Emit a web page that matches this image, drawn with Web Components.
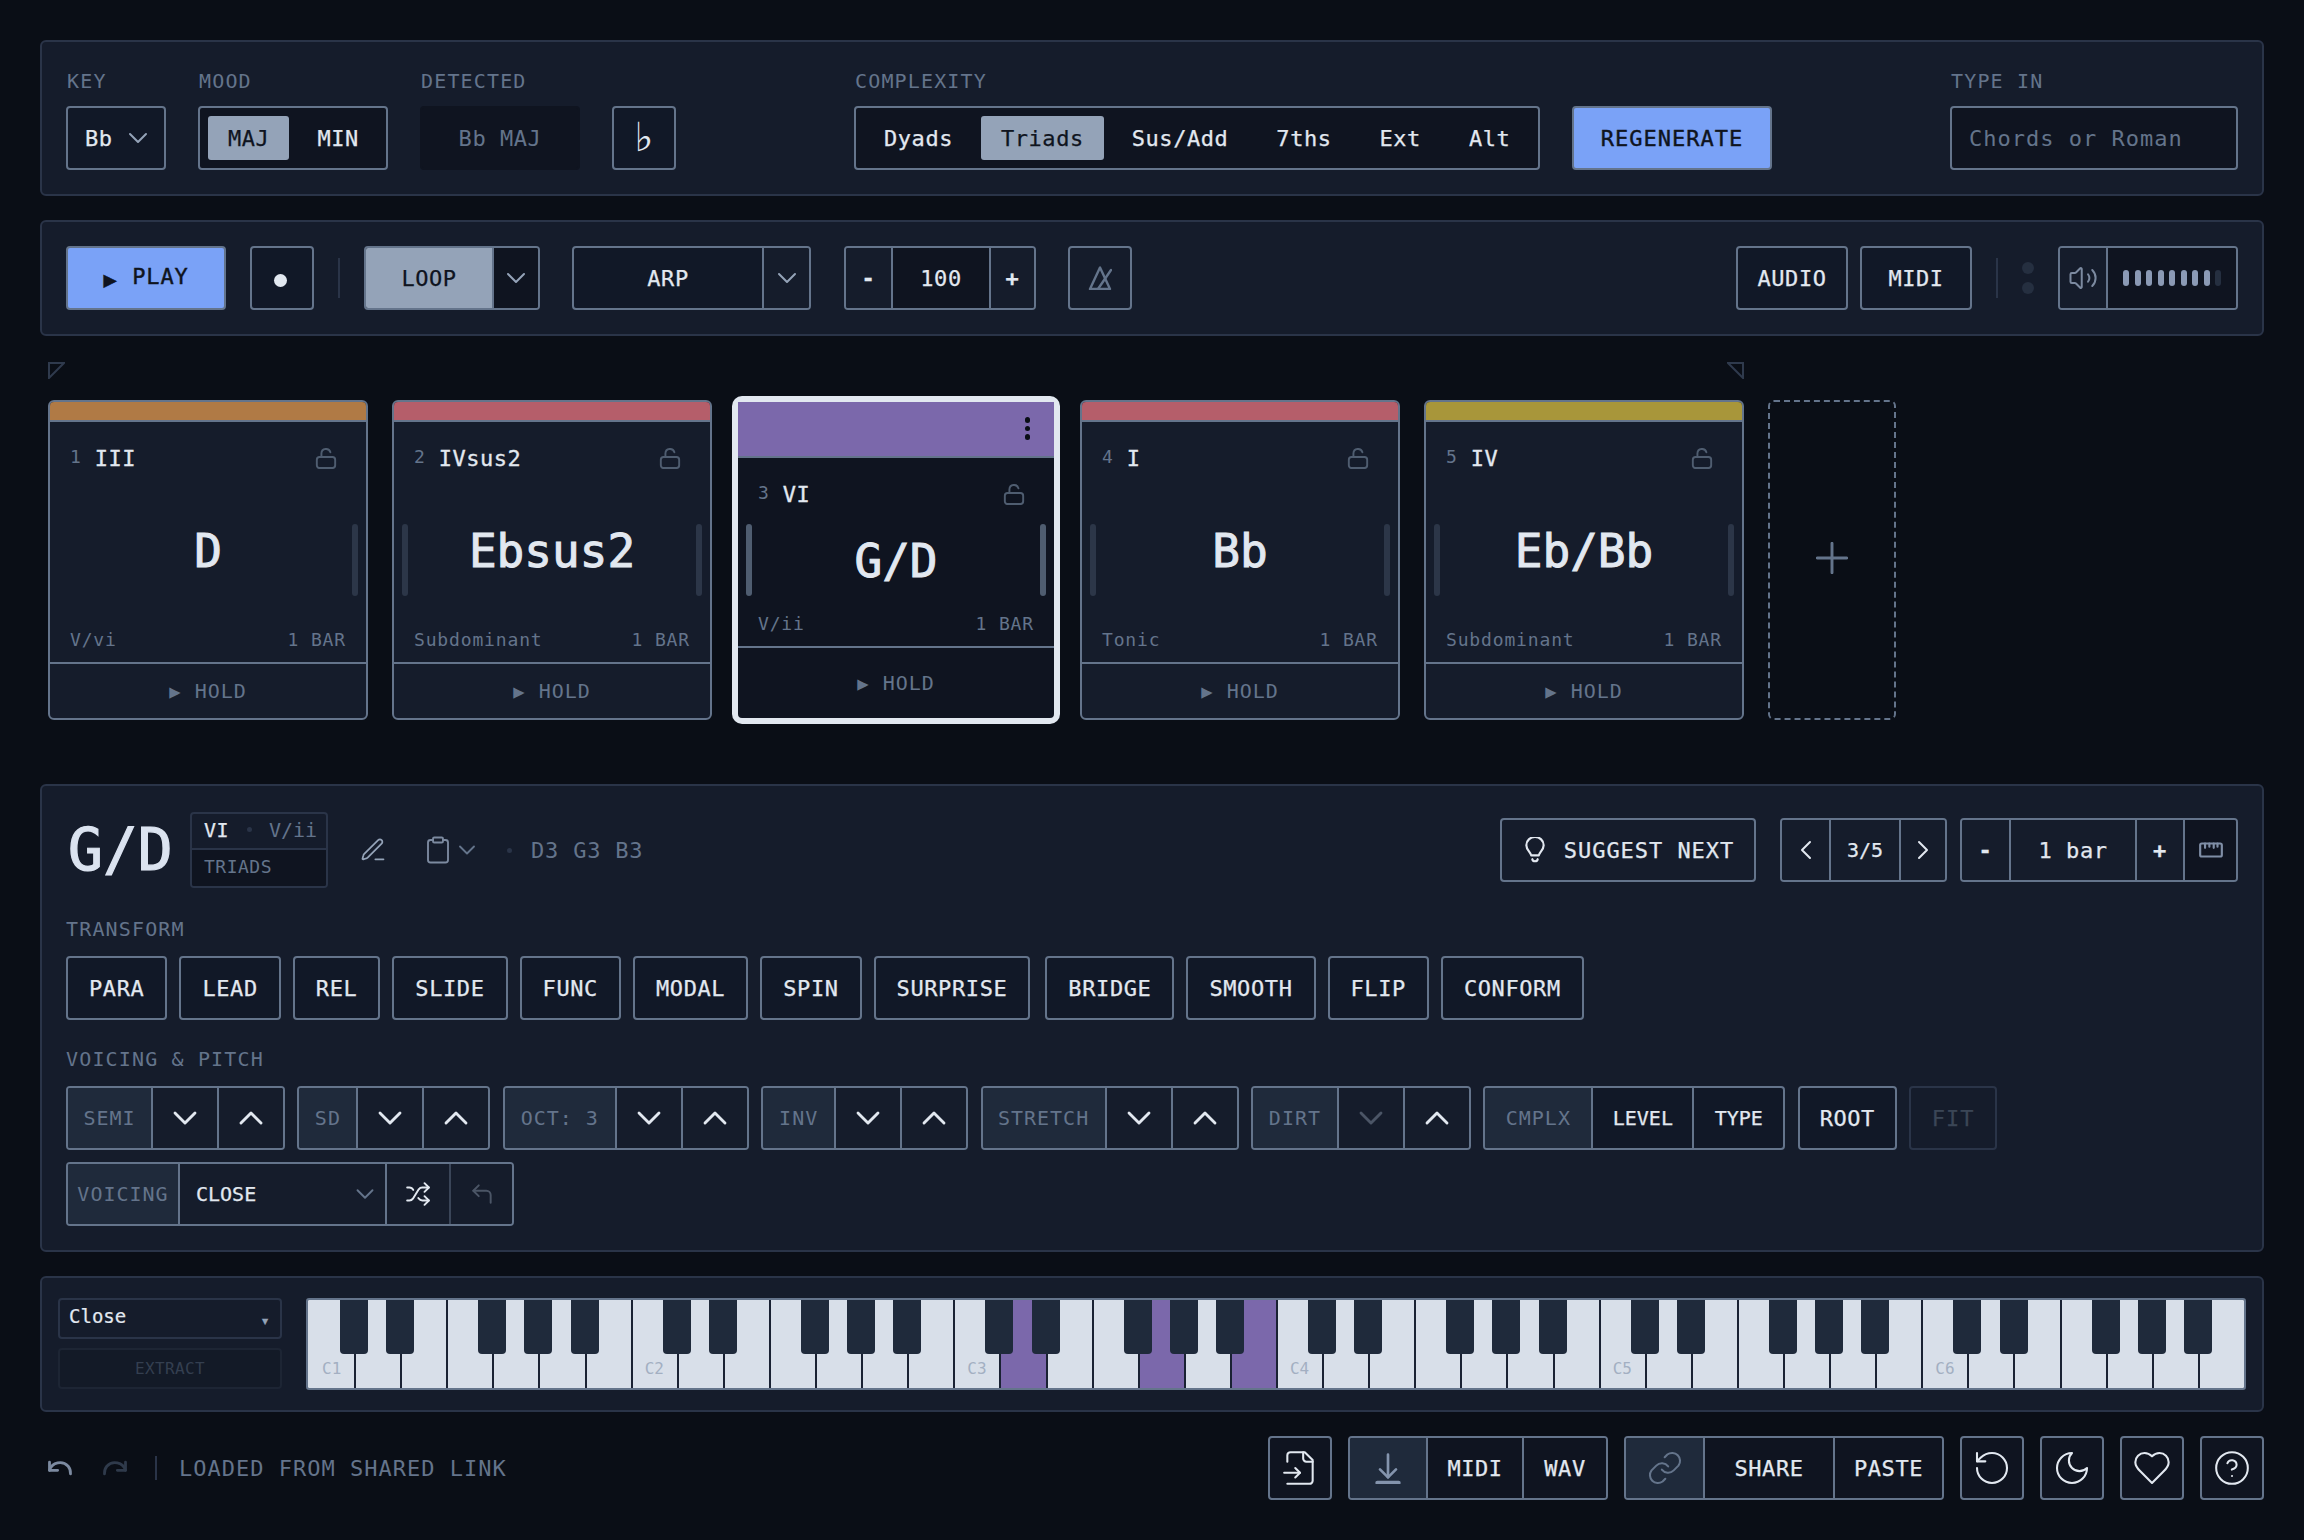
<!DOCTYPE html>
<html lang="en">
<head>
<meta charset="utf-8">
<title>Chord progression</title>
<style>
html, body { margin: 0; background: #0a0e16; }
body {
    font-family: "DejaVu Sans Mono", "Liberation Mono", monospace;
    color: #e2e8f0;
}
</style>
</head>
<body>
<app-shell>

    <ui-panel>
        <ui-row style="justify-content:space-between;align-items:flex-end">
            <ui-row style="gap:32px;align-items:flex-end">
                <ui-field label="KEY">
                    <ui-box style="width:100px;justify-content:flex-start;padding-left:17px;gap:9px"><span>Bb</span><ui-icon name="down" size="32" stroke="1.5" style="color:#94a3b8"></ui-icon></ui-box>
                </ui-field>
                <ui-field label="MOOD">
                    <ui-box tone="dark" style="width:190px;padding:0 8px;gap:8px;justify-content:flex-start"><ui-pill on>MAJ</ui-pill><ui-pill>MIN</ui-pill></ui-box>
                </ui-field>
                <ui-field label="DETECTED">
                    <ui-box tone="well" style="width:160px">Bb MAJ</ui-box>
                </ui-field>
                <ui-box style="width:64px;font-family:'DejaVu Sans',sans-serif;font-size:40px;-webkit-text-stroke:0;padding-bottom:3px">♭</ui-box>
            </ui-row>
            <ui-row style="gap:32px;align-items:flex-end">
                <ui-field label="COMPLEXITY">
                    <ui-box tone="dark" style="width:686px;padding:0 8px;gap:8px;justify-content:flex-start"><ui-pill>Dyads</ui-pill><ui-pill on>Triads</ui-pill><ui-pill>Sus/Add</ui-pill><ui-pill>7ths</ui-pill><ui-pill>Ext</ui-pill><ui-pill>Alt</ui-pill></ui-box>
                </ui-field>
                <ui-box tone="primary" style="width:200px;letter-spacing:1px">REGENERATE</ui-box>
            </ui-row>
            <ui-field label="TYPE IN">
                <ui-box tone="dark" style="width:288px;justify-content:flex-start;padding-left:17px;color:#64748b;letter-spacing:1px;-webkit-text-stroke:0">Chords or Roman</ui-box>
            </ui-field>
        </ui-row>
    </ui-panel>

    <ui-panel style="margin-top:24px">
        <ui-row style="justify-content:space-between;align-items:center">
            <ui-row style="align-items:center">
                <ui-box tone="primary" style="width:160px;gap:15px"><span style="font-size:22px;padding-top:2px">▶</span><span style="padding-bottom:4px;letter-spacing:.8px">PLAY</span></ui-box>
                <ui-box style="width:64px;margin-left:24px"><ui-dot style="margin-top:4px;margin-left:-3px"></ui-dot></ui-box>
                <ui-sep style="margin:0 24px"></ui-sep>
                <ui-box group style="width:176px"><ui-cell tone="active" style="width:126px">LOOP</ui-cell><ui-cell tone="dark" fill><ui-icon name="down" size="32" stroke="1.5" style="color:#94a3b8"></ui-icon></ui-cell></ui-box>
                <ui-box group style="width:239px;margin-left:32px"><ui-cell style="width:188px">ARP</ui-cell><ui-cell tone="panel" fill><ui-icon name="down" size="32" stroke="1.5" style="color:#94a3b8"></ui-icon></ui-cell></ui-box>
                <ui-box group style="width:192px;margin-left:33px"><ui-cell tone="panel" style="width:45px"><b>-</b></ui-cell><ui-cell tone="dark" style="width:98px">100</ui-cell><ui-cell tone="panel" fill><b>+</b></ui-cell></ui-box>
                <ui-box tone="panel" style="width:64px;margin-left:32px;color:#64748b"><ui-icon name="metronome" size="24" stroke="2.4"></ui-icon></ui-box>
            </ui-row>
            <ui-row style="align-items:center">
                <ui-box style="width:112px">AUDIO</ui-box>
                <ui-box style="width:112px;margin-left:12px">MIDI</ui-box>
                <ui-sep style="margin:0 24px"></ui-sep>
                <ui-leds></ui-leds>
                <ui-box group style="width:180px;margin-left:24px"><ui-cell tone="panel" style="width:46px;color:#7c8aa0"><ui-icon name="speaker" size="30" stroke="1.6"></ui-icon></ui-cell><ui-cell tone="dark" fill><ui-meter level="8" count="9"></ui-meter></ui-cell></ui-box>
            </ui-row>
        </ui-row>
    </ui-panel>

    <card-rail>
        <chord-card num="1" roman="III" func="V/vi" color="#b07a45" no-left>D</chord-card>
        <chord-card num="2" roman="IVsus2" func="Subdominant" color="#b55e6a">Ebsus2</chord-card>
        <chord-card num="3" roman="VI" func="V/ii" color="#7b68ab" selected>G/D</chord-card>
        <chord-card num="4" roman="I" func="Tonic" color="#b55e6a">Bb</chord-card>
        <chord-card num="5" roman="IV" func="Subdominant" color="#a8963a">Eb/Bb</chord-card>
        <add-card></add-card>
    </card-rail>

    <ui-panel style="margin-top:64px">
        <ui-row style="justify-content:space-between;align-items:center;height:80px">
            <ui-row style="align-items:center">
                <chord-title>G/D</chord-title>
                <chord-meta roman="VI" func="V/ii" kind="TRIADS" style="margin-left:16px"></chord-meta>
                <ui-icon name="pencil" size="28" stroke="1.5" style="margin-left:31px;color:#94a3b8"></ui-icon>
                <ui-icon name="clipboard" size="30" stroke="1.5" style="margin-left:36px;color:#7c8aa0"></ui-icon>
                <ui-icon name="down" size="28" stroke="1.6" style="margin-left:0;color:#64748b"></ui-icon>
                <ui-note-list style="margin-left:26px">D3 G3 B3</ui-note-list>
            </ui-row>
            <ui-row style="align-items:center">
                <ui-box tone="panel" style="width:256px;gap:16px;letter-spacing:.95px"><ui-icon name="bulb" size="26" stroke="2"></ui-icon><span>SUGGEST NEXT</span></ui-box>
                <ui-box group tone="panel" style="width:167px;margin-left:24px"><ui-cell tone="panel" style="width:47px"><ui-icon name="left" size="32" stroke="1.5"></ui-icon></ui-cell><ui-cell tone="panel" style="width:70px;font-size:20px;letter-spacing:0">3/5</ui-cell><ui-cell tone="panel" fill><ui-icon name="right" size="32" stroke="1.5"></ui-icon></ui-cell></ui-box>
                <ui-box group tone="panel" style="width:278px;margin-left:13px"><ui-cell tone="panel" style="width:47px"><b>-</b></ui-cell><ui-cell tone="panel" style="width:126px">1 bar</ui-cell><ui-cell tone="panel" style="width:48px"><b>+</b></ui-cell><ui-cell tone="dark" fill style="color:#7f8ea6"><ui-icon name="ruler" size="26" stroke="2"></ui-icon></ui-cell></ui-box>
            </ui-row>
        </ui-row>

        <ui-section style="margin-top:25px;margin-bottom:13px">TRANSFORM</ui-section>
        <ui-row style="gap:12px">
            <ui-chip>PARA</ui-chip><ui-chip>LEAD</ui-chip><ui-chip>REL</ui-chip><ui-chip>SLIDE</ui-chip><ui-chip>FUNC</ui-chip><ui-chip>MODAL</ui-chip><ui-chip>SPIN</ui-chip><ui-chip>SURPRISE</ui-chip><ui-chip style="margin-left:3px">BRIDGE</ui-chip><ui-chip>SMOOTH</ui-chip><ui-chip>FLIP</ui-chip><ui-chip>CONFORM</ui-chip>
        </ui-row>

        <ui-section style="margin-top:25px;margin-bottom:13px">VOICING &amp; PITCH</ui-section>
        <ui-row style="gap:12.4px">
            <step-group label="SEMI" width="83"></step-group>
            <step-group label="SD" width="57"></step-group>
            <step-group label="OCT: 3" width="110"></step-group>
            <step-group label="INV" width="71"></step-group>
            <step-group label="STRETCH" width="122"></step-group>
            <step-group label="DIRT" width="84" dim-down></step-group>
            <ui-box group style="width:302px;font-size:20px;letter-spacing:0"><ui-cell tone="label" style="width:106px">CMPLX</ui-cell><ui-cell style="width:101px">LEVEL</ui-cell><ui-cell fill>TYPE</ui-cell></ui-box>
            <ui-box style="width:99px">ROOT</ui-box>
            <ui-box tone="off" style="width:88px">FIT</ui-box>
        </ui-row>
        <ui-row style="margin-top:12px">
            <ui-box group style="width:448px"><ui-cell tone="label" style="width:110px">VOICING</ui-cell><ui-cell tone="panel" style="width:207px;justify-content:flex-start;padding-left:16px;font-size:20px;letter-spacing:0"><span style="flex:1">CLOSE</span><ui-icon name="down" size="30" stroke="1.5" style="color:#64748b;margin-right:5px"></ui-icon></ui-cell><ui-cell tone="panel" style="width:64px"><ui-icon name="shuffle" size="26" stroke="1.8"></ui-icon></ui-cell><ui-cell tone="panel" quiet fill style="color:#4b5566"><ui-icon name="back" size="26" stroke="1.8"></ui-icon></ui-cell></ui-box>
        </ui-row>
    </ui-panel>

    <ui-panel style="margin-top:24px;padding:20px 16px">
        <ui-row style="gap:24px">
            <ui-row style="flex-direction:column;gap:9px;width:224px">
                <mini-select>Close</mini-select>
                <mini-select ghost>EXTRACT</mini-select>
            </ui-row>
            <piano-keys octaves="6" start="1" active="15,18,20" style="flex:1"></piano-keys>
        </ui-row>
    </ui-panel>

    <ui-row style="margin-top:24px;justify-content:space-between;align-items:center">
        <ui-row style="align-items:center;padding-left:6px">
            <ui-icon name="undo" size="28" stroke="2.4" style="color:#7c8aa0"></ui-icon>
            <ui-icon name="redo" size="28" stroke="2.4" style="color:#2f3a4b;margin-left:27px"></ui-icon>
            <ui-sep style="margin:0 22px 0 26px;height:24px"></ui-sep>
            <ui-status>LOADED FROM SHARED LINK</ui-status>
        </ui-row>
        <ui-row style="gap:16px">
            <ui-box tone="dark" style="width:64px"><ui-icon name="filein" size="38" stroke="1.3"></ui-icon></ui-box>
            <ui-box group tone="dark" style="width:260px"><ui-cell tone="label" style="width:76px;color:#8494ad"><ui-icon name="download" size="32" stroke="2"></ui-icon></ui-cell><ui-cell tone="dark" style="width:96px">MIDI</ui-cell><ui-cell tone="dark" fill>WAV</ui-cell></ui-box>
            <ui-box group tone="dark" style="width:320px"><ui-cell tone="label" style="width:77px;color:#64748b"><ui-icon name="link" size="38" stroke="1.3"></ui-icon></ui-cell><ui-cell tone="dark" style="width:130px">SHARE</ui-cell><ui-cell tone="dark" fill>PASTE</ui-cell></ui-box>
            <ui-box tone="dark" style="width:64px"><ui-icon name="reset" size="40" stroke="1.25"></ui-icon></ui-box>
            <ui-box tone="dark" style="width:64px"><ui-icon name="moon" size="40" stroke="1.25"></ui-icon></ui-box>
            <ui-box tone="dark" style="width:64px"><ui-icon name="heart" size="40" stroke="1.25"></ui-icon></ui-box>
            <ui-box tone="dark" style="width:64px"><ui-icon name="help" size="38" stroke="1.3"></ui-icon></ui-box>
        </ui-row>
    </ui-row>

</app-shell>

<script>
// shared colours live here so every shadow root can read them
const LINE = '#64748b';
const DIM_LINE = '#2a3448';
const PANEL = '#151c2b';
const DARK = '#0f1420';
const SOFT = '#111827';

const ICONS = {
    down: '<polyline points="6 9 12 15 18 9"/>',
    up: '<polyline points="6 15 12 9 18 15"/>',
    left: '<polyline points="15 6 9 12 15 18"/>',
    right: '<polyline points="9 6 15 12 9 18"/>',
    metronome: '<path d="M2 23H22L12 1.5Z"/><path d="M23 4L10 23"/>',
    speaker: '<path d="M11 4.7a.7.7 0 0 0-1.2-.5L6.4 7.6A1.4 1.4 0 0 1 5.4 8H3a1 1 0 0 0-1 1v6a1 1 0 0 0 1 1h2.4a1.4 1.4 0 0 1 1 .4l3.4 3.4a.7.7 0 0 0 1.2-.5z"/><path d="M16 9a5 5 0 0 1 0 6"/><path d="M19.4 18.4a9 9 0 0 0 0-12.8"/>',
    lock: '<rect x="2" y="11" width="20" height="12" rx="3"/><path d="M7 11V7a5 5 0 0 1 9.8-1.2"/>',
    pencil: '<path d="M14 20h7"/><path d="M16.4 3.6a1 1 0 0 1 3 3L7.4 18.6a2 2 0 0 1-.9.5l-2.9.9a.5.5 0 0 1-.6-.6l.8-2.9a2 2 0 0 1 .5-.9z"/>',
    clipboard: '<rect x="8" y="2" width="8" height="4" rx="1"/><path d="M16 4h2a2 2 0 0 1 2 2v14a2 2 0 0 1-2 2H6a2 2 0 0 1-2-2V6a2 2 0 0 1 2-2h2"/>',
    bulb: '<path d="M8.5 18C8 15 4 13 4 8.5a8 7.5 0 0 1 16 0C20 13 16 15 15.5 18Z" transform="translate(0 -1)"/><path d="M9.5 20.5c.5 2.5 4.5 2.5 5 0"/>',
    ruler: '<rect x="2" y="6" width="20" height="12" rx="1.5"/><path d="M6.5 6v4M10.5 6v3M14.5 6v4M18 6v3"/>',
    shuffle: '<path d="m18 14 4 4-4 4"/><path d="m18 2 4 4-4 4"/><path d="M2 18h2a4 4 0 0 0 3.3-1.7l5.4-8.6A4 4 0 0 1 16 6h6"/><path d="M2 6h2a4 4 0 0 1 3.6 2.2"/><path d="M22 18h-6a4 4 0 0 1-3.3-1.8l-.4-.5"/>',
    back: '<polyline points="9 14 4 9 9 4"/><path d="M20 20v-7a4 4 0 0 0-4-4H4"/>',
    undo: '<path d="M3 7v7h7"/><path d="M3 14a9.5 9.5 0 0 1 16-3.5 9 9 0 0 1 2 6.5"/>',
    redo: '<path d="M21 7v7h-7"/><path d="M21 14a9.5 9.5 0 0 0-16-3.5 9 9 0 0 0-2 6.5"/>',
    filein: '<path d="M4 22h14a2 2 0 0 0 2-2V7l-5-5H6a2 2 0 0 0-2 2v4"/><path d="M14 2v4a2 2 0 0 0 2 2h4"/><path d="M2 15h10"/><path d="m9 18 3-3-3-3"/>',
    download: '<path d="M12 2v17"/><path d="M6 13l6 6 6-6"/><path d="M4 23h16" stroke-width="3"/>',
    link: '<path d="M10 13a5 5 0 0 0 7.5.5l3-3a5 5 0 0 0-7-7l-1.7 1.7"/><path d="M14 11a5 5 0 0 0-7.5-.5l-3 3a5 5 0 0 0 7 7l1.7-1.7"/>',
    reset: '<path d="M3 12a9 9 0 1 0 9-9 9.8 9.8 0 0 0-6.7 2.7L3 8"/><path d="M3 3v5h5"/>',
    moon: '<path d="M12 3a6 6 0 0 0 9 9 9 9 0 1 1-9-9Z"/>',
    heart: '<path d="M19 14c1.5-1.5 3-3.2 3-5.5A5.5 5.5 0 0 0 16.500 3c-1.800 0-3 .5-4.500 2-1.500-1.500-2.700-2-4.500-2A5.500 5.500 0 0 0 2 8.500c0 2.300 1.500 4 3 5.500l7 7Z"/>',
    help: '<circle cx="12" cy="12" r="10"/><path d="M9.100 9a3 3 0 0 1 5.800 1c0 2-3 3-3 3"/><path d="M12 17h.01"/>',
    plus: '<path d="M12 1v22M1 12h22"/>'
};

// base class: one template per tag, stamped into an open shadow root
class ShadowElement extends HTMLElement {
    constructor() {
        super();
        const tpl = document.createElement('template');
        tpl.innerHTML = this.constructor.markup;
        this.attachShadow({mode: 'open'}).append(tpl.content.cloneNode(true));
    }
}

function simple(tag, markup) {
    customElements.define(tag, class extends ShadowElement {
        static get markup() { return markup; }
    });
}

simple('app-shell', `<style>
:host { display: block; box-sizing: border-box; width: 2304px; height: 1540px; padding: 40px; }
</style><slot></slot>`);

simple('ui-panel', `<style>
:host { display: block; box-sizing: border-box; padding: 24px; background: ${PANEL}; border: 2px solid ${DIM_LINE}; border-radius: 6px; }
</style><slot></slot>`);

simple('ui-row', `<style>
:host { display: flex; }
</style><slot></slot>`);

simple('ui-section', `<style>
:host { display: block; height: 28px; line-height: 28px; font-size: 20px; letter-spacing: 1.15px; color: ${LINE}; }
</style><slot></slot>`);

simple('ui-status', `<style>
:host { display: block; font-size: 22px; letter-spacing: 1px; color: ${LINE}; }
</style><slot></slot>`);

simple('ui-note-list', `<style>
:host { display: flex; align-items: center; gap: 19px; font-size: 22px; letter-spacing: .8px; color: ${LINE}; }
i { width: 5px; height: 5px; border-radius: 50%; background: ${DIM_LINE}; }
</style><i></i><slot></slot>`);

simple('ui-sep', `<style>
:host { display: block; width: 2px; height: 40px; background: ${DIM_LINE}; flex: none; }
</style>`);

simple('ui-dot', `<style>
:host { display: block; width: 13px; height: 13px; border-radius: 50%; background: #e2e8f0; }
</style>`);

simple('ui-leds', `<style>
:host { display: flex; flex-direction: column; gap: 8px; }
i { width: 12px; height: 12px; border-radius: 50%; background: #252f40; }
</style><i></i><i></i>`);

simple('ui-box', `<style>
:host {
    display: inline-flex; flex: none; box-sizing: border-box; height: 64px;
    align-items: center; justify-content: center; overflow: hidden;
    border: 2px solid ${LINE}; border-radius: 4px; background: ${SOFT};
    font-size: 22px; letter-spacing: .55px; color: #e2e8f0;
    -webkit-text-stroke: .25px currentColor;
}
:host([group]) { align-items: stretch; justify-content: flex-start; }
:host([tone=dark]) { background: ${DARK}; }
:host([tone=panel]) { background: ${PANEL}; }
:host([tone=well]) { background: ${DARK}; border-color: ${DARK}; color: ${LINE}; -webkit-text-stroke: 0; }
:host([tone=primary]) { background: #7aa2f7; color: ${DARK}; -webkit-text-stroke: .4px currentColor; }
:host([tone=off]) { background: ${PANEL}; border-color: ${DIM_LINE}; color: #3b4656; font-size: 22px; letter-spacing: 1px; }
</style><slot></slot>`);

simple('ui-cell', `<style>
:host { display: flex; flex: none; box-sizing: border-box; align-items: center; justify-content: center; }
:host(:not(:first-child)) { border-left: 2px solid ${LINE}; }
:host([quiet]) { border-left-color: #3a4558; }
:host([fill]) { flex: 1; }
:host([tone=label]) { background: #1f2a3b; color: ${LINE}; font-size: 20px; letter-spacing: 1px; -webkit-text-stroke: 0; }
:host([tone=dark]) { background: ${DARK}; }
:host([tone=panel]) { background: ${PANEL}; }
:host([tone=active]) { background: #94a3b8; color: ${DARK}; }
</style><slot></slot>`);

simple('ui-pill', `<style>
:host { display: flex; height: 44px; align-items: center; padding: 0 20px; border-radius: 3px; }
:host([on]) { background: #94a3b8; color: ${DARK}; }
</style><slot></slot>`);

simple('ui-chip', `<style>
:host {
    display: inline-flex; flex: none; box-sizing: border-box; height: 64px; align-items: center; padding: 0 21px;
    border: 2px solid ${LINE}; border-radius: 4px; background: ${SOFT};
    font-size: 22px; letter-spacing: .6px; color: #e2e8f0;
    -webkit-text-stroke: .25px currentColor;
}
</style><slot></slot>`);

simple('chord-title', `<style>
:host { display: block; box-sizing: border-box; width: 108px; padding-left: 2px; font-size: 58px; line-height: 80px; color: #dbe3f0; -webkit-text-stroke: 1.2px currentColor; }
</style><slot></slot>`);

simple('card-rail', `<style>
:host { display: block; margin: 26px 8px 0; }
.flags { display: flex; justify-content: space-between; width: 1696px; height: 38px; color: #2f3a4d; }
.cards { display: flex; gap: 24px; }
svg { display: block; }
</style>
<div class="flags">
    <svg width="17" height="17" viewBox="0 0 17 17" fill="none" stroke="currentColor" stroke-width="2"><path d="M1 1H16L1 16Z"/></svg>
    <svg width="17" height="17" viewBox="0 0 17 17" fill="none" stroke="currentColor" stroke-width="2"><path d="M16 1H1L16 16Z"/></svg>
</div>
<div class="cards"><slot></slot></div>`);

simple('add-card', `<style>
:host { display: flex; flex: none; box-sizing: border-box; width: 128px; height: 320px; align-items: center; justify-content: center; padding-bottom: 4px; border: 2px dashed ${LINE}; border-radius: 6px; color: ${LINE}; }
</style><ui-icon name="plus" size="32" stroke="2.2"></ui-icon>`);

simple('mini-select', `<style>
:host { display: flex; box-sizing: border-box; height: 41px; align-items: center; padding: 0 9px 5px; border: 2px solid ${DIM_LINE}; border-radius: 4px; font-size: 19px; color: #e2e8f0; -webkit-text-stroke: .2px currentColor; }
:host([ghost]) { padding: 0; border-color: #1d2534; background: #131a27; font-size: 16px; letter-spacing: .4px; color: #343f50; -webkit-text-stroke: 0; }
:host([ghost]) i { display: none; }
:host([ghost]) span { text-align: center; }
span { flex: 1; }
i { font-style: normal; font-size: 16px; line-height: 1; color: #94a3b8; padding-top: 10px; margin-right: 1px; }
</style><span><slot></slot></span><i>▾</i>`);

customElements.define('ui-icon', class extends HTMLElement {
    constructor() {
        super();
        this.attachShadow({mode: 'open'});
    }
    connectedCallback() {
        const size = this.getAttribute('size') || 24;
        const stroke = this.getAttribute('stroke') || 2;
        const shapes = ICONS[this.getAttribute('name')] || '';
        this.shadowRoot.innerHTML = `<style>
:host { display: block; flex: none; width: ${size}px; height: ${size}px; }
svg { display: block; }
</style><svg width="${size}" height="${size}" viewBox="0 0 24 24" fill="none" stroke="currentColor" stroke-width="${stroke}" stroke-linecap="round" stroke-linejoin="round">${shapes}</svg>`;
    }
});

customElements.define('ui-field', class extends HTMLElement {
    constructor() {
        super();
        this.attachShadow({mode: 'open'});
    }
    connectedCallback() {
        this.shadowRoot.innerHTML = `<style>
:host { display: flex; flex-direction: column; flex: none; }
div { height: 28px; line-height: 30px; margin-bottom: 12px; padding-left: 1px; font-size: 20px; letter-spacing: 1.15px; color: ${LINE}; }
</style><div>${this.getAttribute('label')}</div><slot></slot>`;
    }
});

customElements.define('ui-meter', class extends HTMLElement {
    constructor() {
        super();
        this.attachShadow({mode: 'open'});
    }
    connectedCallback() {
        const level = +this.getAttribute('level');
        const count = +this.getAttribute('count');
        let bars = '';
        for (let i = 0; i < count; i++) bars += `<i class="${i < level ? 'on' : ''}"></i>`;
        this.shadowRoot.innerHTML = `<style>
:host { display: flex; gap: 5.500px; }
i { width: 6px; height: 16px; border-radius: 3px; background: #252f40; }
i.on { background: #8b9ab5; }
</style>${bars}`;
    }
});

customElements.define('step-group', class extends HTMLElement {
    constructor() {
        super();
        this.attachShadow({mode: 'open'});
    }
    connectedCallback() {
        const dim = this.hasAttribute('dim-down') ? 'color:#4b5566' : '';
        this.shadowRoot.innerHTML = `<style>
:host { display: block; flex: none; }
</style><ui-box group><ui-cell tone="label" style="width:${this.getAttribute('width')}px">${this.getAttribute('label')}</ui-cell><ui-cell tone="panel" style="width:66px;${dim}"><ui-icon name="down" size="40" stroke="1.7"></ui-icon></ui-cell><ui-cell tone="panel" style="width:66px"><ui-icon name="up" size="40" stroke="1.7"></ui-icon></ui-cell></ui-box>`;
    }
});

customElements.define('chord-meta', class extends HTMLElement {
    constructor() {
        super();
        this.attachShadow({mode: 'open'});
    }
    connectedCallback() {
        this.shadowRoot.innerHTML = `<style>
:host { display: block; flex: none; box-sizing: border-box; width: 138px; height: 76px; border: 2px solid ${DIM_LINE}; border-radius: 4px; overflow: hidden; }
.top { display: flex; box-sizing: border-box; align-items: center; height: 36px; padding: 0 0 3px 12px; font-size: 20px; letter-spacing: .4px; color: #e2e8f0; border-bottom: 2px solid ${DIM_LINE}; -webkit-text-stroke: .25px currentColor; }
.top i { width: 5px; height: 5px; margin: 0 17px 0 18px; border-radius: 50%; background: ${DIM_LINE}; }
.top span { color: ${LINE}; letter-spacing: 0; -webkit-text-stroke: 0; }
.bottom { display: flex; box-sizing: border-box; align-items: center; height: 36px; padding: 0 0 4px 12px; background: ${DARK}; font-size: 18px; letter-spacing: .5px; color: ${LINE}; }
</style><div class="top">${this.getAttribute('roman')}<i></i><span>${this.getAttribute('func')}</span></div><div class="bottom">${this.getAttribute('kind')}</div>`;
    }
});

customElements.define('chord-card', class extends HTMLElement {
    constructor() {
        super();
        this.attachShadow({mode: 'open'});
    }
    connectedCallback() {
        const selected = this.hasAttribute('selected');
        this.shadowRoot.innerHTML = `<style>
* { box-sizing: border-box; }
:host { display: flex; flex: none; flex-direction: column; box-sizing: border-box; position: relative; width: 320px; height: 320px; background: ${PANEL}; border: 2px solid ${LINE}; border-radius: 6px; overflow: hidden; }
:host([selected]) { background: ${DARK}; border-color: #e2e8f0; overflow: visible; box-shadow: 0 0 0 4px #e2e8f0; }
.bar { flex: none; display: flex; align-items: center; justify-content: flex-end; height: 20px; padding-right: 24px; border-bottom: 2px solid ${LINE}; }
:host([selected]) .bar { height: 56px; }
.dots { display: flex; flex-direction: column; gap: 3.200px; margin-top: -1px; }
.dots i { width: 5.500px; height: 5.500px; border-radius: 50%; background: #0a0e16; }
.body { flex: 1; min-height: 0; display: flex; flex-direction: column; padding: 24px 20px 11px; }
.head { display: flex; align-items: center; height: 24px; }
.num { font-size: 18px; color: ${LINE}; margin-right: 14px; padding-bottom: 4px; }
.roman { flex: 1; font-size: 22px; letter-spacing: .5px; -webkit-text-stroke: .3px currentColor; color: #e2e8f0; }
.head ui-icon { margin-right: 9px; color: #4f5d70; }
.chord { flex: 1; display: flex; align-items: center; justify-content: center; padding-top: 2px; font-size: 46px; line-height: 1; -webkit-text-stroke: 1px currentColor; color: #e2e8f0; }
.meta { display: flex; justify-content: space-between; line-height: 22px; font-size: 18px; letter-spacing: .85px; color: ${LINE}; }
.hold { flex: none; display: flex; align-items: center; justify-content: center; gap: 13px; height: 56px; border-top: 2px solid ${LINE}; font-size: 20px; letter-spacing: 1px; color: ${LINE}; }
:host([selected]) .hold { height: 72px; }
.hold span { font-size: 19px; }
.grip { position: absolute; top: 122px; width: 6px; height: 72px; border-radius: 3px; background: #2c3648; }
.grip.l { left: 8px; }
.grip.r { right: 8px; }
:host([selected]) .grip { background: #4f5d70; }
</style>
<div class="bar" style="background:${this.getAttribute('color')}">${selected ? '<div class="dots"><i></i><i></i><i></i></div>' : ''}</div>
<div class="body">
    <div class="head"><span class="num">${this.getAttribute('num')}</span><span class="roman">${this.getAttribute('roman')}</span><ui-icon name="lock" size="22" stroke="2.100"></ui-icon></div>
    <div class="chord"><slot></slot></div>
    <div class="meta"><span>${this.getAttribute('func')}</span><span>1 BAR</span></div>
</div>
<div class="hold"><span>▶</span>HOLD</div>
${this.hasAttribute('no-left') ? '' : '<div class="grip l"></div>'}<div class="grip r"></div>`;
    }
});

customElements.define('piano-keys', class extends HTMLElement {
    constructor() {
        super();
        this.attachShadow({mode: 'open'});
    }
    connectedCallback() {
        const octaves = +this.getAttribute('octaves');
        const start = +this.getAttribute('start');
        const active = this.getAttribute('active').split(',').map(Number);
        const total = octaves * 7;
        let whites = '';
        let blacks = '';
        for (let i = 0; i < total; i++) {
            const step = i % 7;
            const label = step === 0 ? `<span>C${start + i / 7}</span>` : '';
            whites += `<div class="w${active.includes(i) ? ' on' : ''}">${label}</div>`;
            // no black key between E-F and B-C
            if (step !== 2 && step !== 6) {
                blacks += `<div class="b" style="left:calc(${(i + 1) * 100 / total}% - 14px)"></div>`;
            }
        }
        this.shadowRoot.innerHTML = `<style>
:host { display: block; box-sizing: border-box; height: 92px; border: 2px solid ${LINE}; border-radius: 3px; overflow: hidden; }
.keys { position: relative; display: flex; height: 100%; }
.w { flex: 1; display: flex; align-items: flex-end; padding: 0 0 10px 12px; background: #d8dfe9; border-left: 2px solid #1a2233; box-sizing: border-box; font-size: 16px; color: #a3afc2; }
.w:first-child { border-left: 0; padding-left: 14px; }
.w.on { background: #7b68ab; }
.b { position: absolute; top: 0; width: 28px; height: 54px; background: #1f2a3b; border-radius: 0 0 4px 4px; }
</style><div class="keys">${whites}${blacks}</div>`;
    }
});
</script>
</body>
</html>
